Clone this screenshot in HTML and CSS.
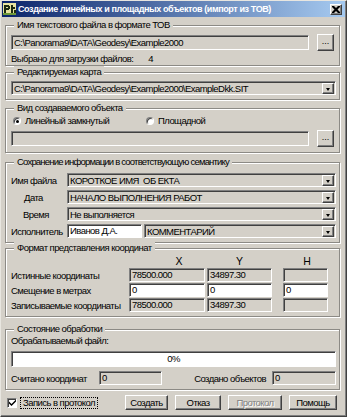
FILE: index.html
```html
<!DOCTYPE html>
<html lang="ru">
<head>
  <meta charset="UTF-8">
  <title>Создание линейных и площадных объектов</title>
  <link rel="stylesheet" href="styles.css">
</head>
<body>
  <div class="window">
    <div class="titlebar">
      <svg class="app-icon" width="13" height="12" viewBox="0 0 13 12">
        <rect x="0" y="0" width="13" height="12" fill="#e8e4a0"/>
        <rect x="1" y="2" width="2" height="8" fill="#1c2a10"/>
        <rect x="3" y="2" width="3" height="2" fill="#1c2a10"/>
        <rect x="5" y="3" width="2" height="3" fill="#1c2a10"/>
        <rect x="3" y="5" width="3" height="2" fill="#1c2a10"/>
        <rect x="8" y="2" width="2" height="8" fill="#1c2a10"/>
        <rect x="10" y="4" width="2" height="2" fill="#1c2a10"/>
        <rect x="11" y="7" width="2" height="3" fill="#1c2a10"/>
        <rect x="0" y="10" width="13" height="2" fill="#6f9a3a"/>
      </svg>
      <span class="title">Создание линейных и площадных объектов (импорт из ТОВ)</span>
      <span class="close">
        <svg width="8" height="7" viewBox="0 0 8 7"><path d="M0 0h2l2 2 2-2h2v1l-2.5 2.5 2.5 2.5v1h-2l-2-2-2 2h-2v-1l2.5-2.5-2.5-2.5z" fill="#000"/></svg>
      </span>
    </div>

    <div class="content">
      <fieldset class="group g-file">
        <legend>Имя текстового файла в формате ТОВ</legend>
        <div class="line">
          <div class="field wide">C:\Panorama9\DATA\Geodesy\Example2000</div>
          <div class="btn dots">...</div>
        </div>
        <div class="count-row"><span>Выбрано для загрузки файлов:</span><span class="count">4</span></div>
      </fieldset>

      <fieldset class="group g-map">
        <legend>Редактируемая карта</legend>
        <div class="combo">C:\Panorama9\DATA\Geodesy\Example2000\ExampleDkk.SIT<span class="drop"></span></div>
      </fieldset>

      <fieldset class="group g-kind">
        <legend>Вид создаваемого объекта</legend>
        <div class="radios">
          <label class="radio first"><span class="dot checked"></span>Линейный замкнутый</label>
          <label class="radio"><span class="dot"></span>Площадной</label>
        </div>
        <div class="line">
          <div class="field wide"></div>
          <div class="btn dots">...</div>
        </div>
      </fieldset>

      <fieldset class="group g-sem">
        <legend>Сохранение информации в соответствующую семантику</legend>
        <div class="sem-grid">
          <span class="lbl">Имя файла</span>
          <div class="combo">КОРОТКОЕ ИМЯ&nbsp; ОБ ЕКТА<span class="drop"></span></div>
          <span class="lbl shift-date">Дата</span>
          <div class="combo">НАЧАЛО ВЫПОЛНЕНИЯ РАБОТ<span class="drop"></span></div>
          <span class="lbl shift-time">Время</span>
          <div class="combo">Не выполняется<span class="drop"></span></div>
          <span class="lbl">Исполнитель</span>
          <div class="pair">
            <div class="field white person">Иванов Д.А.</div>
            <div class="combo">КОММЕНТАРИЙ<span class="drop"></span></div>
          </div>
        </div>
      </fieldset>

      <fieldset class="group g-coord">
        <legend>Формат представления координат</legend>
        <div class="coord-grid">
          <span></span>
          <span class="head head-x">X</span>
          <span class="head head-y">Y</span>
          <span class="head head-h">H</span>

          <span class="lbl">Истинные координаты</span>
          <div class="field cx">78500.000</div>
          <div class="field cy">34897.30</div>
          <div class="field ch"></div>

          <span class="lbl">Смещение в метрах</span>
          <div class="field white cx">0</div>
          <div class="field white cy">0</div>
          <div class="field white ch">0</div>

          <span class="lbl">Записываемые координаты</span>
          <div class="field cx">78500.000</div>
          <div class="field cy">34897.30</div>
          <div class="field ch"></div>
        </div>
      </fieldset>

      <fieldset class="group g-state">
        <legend>Состояние обработки</legend>
        <div class="state-caption">Обрабатываемый файл:</div>
        <div class="progress">0%</div>
        <div class="stat-row">
          <span class="stat-lbl">Считано координат</span>
          <div class="field stat">0</div>
          <span class="stat-lbl created">Создано объектов</span>
          <div class="field stat last">0</div>
        </div>
      </fieldset>

      <div class="footer">
        <span class="check">
          <svg width="7" height="7" viewBox="0 0 7 7"><path d="M0 2.5l2.5 2.5 4.5-4.5v2l-4.5 4.5-2.5-2.5z" fill="#000"/></svg>
        </span>
        <span class="check-label">Запись в протокол</span>
        <div class="buttons">
          <div class="btn action b-create">Создать</div>
          <div class="btn action b-cancel">Отказ</div>
          <div class="btn action b-log disabled">Протокол</div>
          <div class="btn action b-help">Помощь</div>
        </div>
      </div>
    </div>
  </div>
</body>
</html>
```

FILE: styles.css
```css
* {
  box-sizing: border-box;
}

body {
  margin: 0;
  font-family: "Liberation Sans", Arial, sans-serif;
  font-size: 9.5px;
  letter-spacing: -0.55px;
  color: #000;
  background: #d4d0c8;
}

.window {
  width: 347px;
  height: 417px;
  background: #d4d0c8;
  border: 1px solid;
  border-color: #e8e6e0 #404040 #404040 #e8e6e0;
  box-shadow: inset -1px -1px #808080;
}

/* title bar */
.titlebar {
  height: 16px;
  margin: 0 1px;
  padding: 0 3px 0 1px;
  display: flex;
  align-items: center;
  background: linear-gradient(to right, #0a246a, #a6caf0);
}

.app-icon {
  flex: none;
}

.title {
  margin-left: 2px;
  color: #fff;
  font-weight: bold;
  font-size: 9px;
  letter-spacing: -0.4px;
  white-space: nowrap;
}

.close {
  margin-left: auto;
  width: 12px;
  height: 11px;
  display: flex;
  align-items: center;
  justify-content: center;
  background: #d4d0c8;
  border: 1px solid;
  border-color: #fff #404040 #404040 #fff;
  box-shadow: inset -1px -1px #808080;
}

.content {
  padding: 2px 6px 0 4px;
}

/* group boxes */
.group {
  margin: 0;
  padding: 0 3px 0 5px;
  border: 1px solid #8c8a85;
  box-shadow: inset 1px 1px #fff, 1px 1px #fff;
}

.group legend {
  margin-left: 3px;
  padding: 0 3px;
  line-height: 12px;
  background: #d4d0c8;
}

.lbl {
  white-space: nowrap;
}

/* common controls */
.field {
  height: 15px;
  padding: 0 2px;
  line-height: 13px;
  white-space: nowrap;
  overflow: hidden;
  background: #d4d0c8;
  border: 1px solid;
  border-color: #808080 #fff #fff #808080;
  box-shadow: inset 1px 1px #404040;
}

.field.white {
  background: #fff;
}

.btn {
  display: flex;
  align-items: center;
  justify-content: center;
  background: #d4d0c8;
  border: 1px solid;
  border-color: #fff #404040 #404040 #fff;
  box-shadow: inset -1px -1px #808080;
}

.combo {
  height: 14px;
  display: flex;
  align-items: center;
  padding: 0 1px 0 2px;
  white-space: nowrap;
  background: #d4d0c8;
  border: 1px solid;
  border-color: #808080 #fff #fff #808080;
  box-shadow: inset 1px 1px #404040;
}

.drop {
  margin-left: auto;
  width: 12px;
  height: 11px;
  position: relative;
  background: #d4d0c8;
  border: 1px solid;
  border-color: #fff #404040 #404040 #fff;
  box-shadow: inset -1px -1px #808080;
}

.drop::after {
  content: "";
  position: absolute;
  left: 3px;
  top: 4px;
  border-left: 2.5px solid transparent;
  border-right: 2.5px solid transparent;
  border-top: 3px solid #000;
}

.line {
  display: flex;
  align-items: center;
}

.field.wide {
  width: 298px;
}

.dots {
  width: 17px;
  height: 17px;
  margin-left: 8px;
  font-size: 9px;
  line-height: 9px;
  letter-spacing: 0;
  padding-bottom: 2px;
}

/* group 1 */
.g-file {
  padding-top: 3px;
}

.count-row {
  margin-top: 2px;
  line-height: 12px;
}

.count {
  margin-left: 15px;
}

/* group 2 */
.g-map {
  padding-top: 3px;
  padding-bottom: 4px;
}

/* group 3 */
.g-kind {
  margin-top: 2px;
  padding-bottom: 5px;
}

.radios {
  height: 13px;
  display: flex;
  align-items: center;
}

.radio {
  display: flex;
  align-items: center;
  padding-left: 2px;
}

.radio.first {
  width: 133px;
}

.dot {
  width: 8px;
  height: 8px;
  margin-right: 4px;
  border-radius: 50%;
  background: #fff;
  border: 1px solid;
  border-color: #808080 #fff #fff #808080;
  box-shadow: inset 1px 1px #404040;
  position: relative;
}

.dot.checked::after {
  content: "";
  position: absolute;
  left: 2px;
  top: 2px;
  width: 3px;
  height: 3px;
  border-radius: 50%;
  background: #000;
}

.g-kind .line {
  margin-top: 3px;
}

/* group 4 */
.g-sem {
  margin-top: 3px;
  padding-top: 5px;
  padding-bottom: 4px;
}

.g-sem legend {
  letter-spacing: -0.8px;
}

.sem-grid {
  display: grid;
  grid-template-columns: 56px 1fr;
  row-gap: 3px;
  align-items: center;
}

.shift-date {
  padding-left: 13px;
}

.shift-time {
  padding-left: 12px;
}

.pair {
  display: flex;
  gap: 2px;
}

.field.person {
  width: 75px;
  height: 14px;
  line-height: 12px;
}

.pair .combo {
  flex: 1;
}

/* group 5 */
.g-coord {
  margin-top: -1px;
  padding-top: 1px;
  padding-bottom: 4px;
}

.coord-grid {
  display: grid;
  grid-template-columns: 118px 78px 76px 45px;
  row-gap: 1px;
  align-items: center;
}

.head {
  line-height: 12px;
  text-align: center;
  font-size: 10.5px;
  letter-spacing: 0;
}

.head-x {
  width: 76px;
  padding-left: 24px;
}

.head-y {
  width: 65px;
}

.head-h {
  padding-left: 3px;
}

.coord-grid .field {
  height: 14px;
  line-height: 12px;
}

.field.cx {
  width: 76px;
}

.field.cy {
  width: 65px;
}

.field.ch {
  width: 45px;
}

/* group 6 */
.g-state {
  margin-top: 6px;
  padding-bottom: 4px;
}

.state-caption {
  line-height: 12px;
}

.progress {
  height: 16px;
  margin-top: 4px;
  line-height: 14px;
  text-align: center;
  background: #fff;
  border: 1px solid;
  border-color: #808080 #fff #fff #808080;
  box-shadow: inset 1px 1px #404040;
}

.stat-row {
  margin-top: 4px;
  display: flex;
  align-items: center;
}

.stat-lbl {
  width: 88px;
  white-space: nowrap;
}

.stat-lbl.created {
  width: auto;
  margin-left: auto;
  margin-right: 6px;
}

.field.stat {
  width: 63px;
  height: 14px;
  line-height: 12px;
}

.field.stat.last {
  width: 64px;
}

/* footer */
.footer {
  margin-top: 5px;
  padding: 0 3px 0 2px;
  display: flex;
  align-items: center;
}

.check {
  width: 10px;
  height: 10px;
  display: flex;
  align-items: center;
  justify-content: center;
  background: #fff;
  border: 1px solid;
  border-color: #808080 #fff #fff #808080;
  box-shadow: inset 1px 1px #404040;
}

.check-label {
  margin-left: 3px;
  padding: 0 2px;
  line-height: 10px;
  white-space: nowrap;
  border: 1px dotted #000;
}

.buttons {
  margin-left: auto;
  display: flex;
  gap: 7px;
}

.btn.action {
  height: 15px;
  line-height: 12px;
}

.b-create {
  width: 43px;
}

.b-cancel {
  width: 46px;
}

.b-log {
  width: 54px;
}

.b-help {
  width: 48px;
}

.btn.disabled {
  color: #808080;
  text-shadow: 1px 1px #fff;
}
```
